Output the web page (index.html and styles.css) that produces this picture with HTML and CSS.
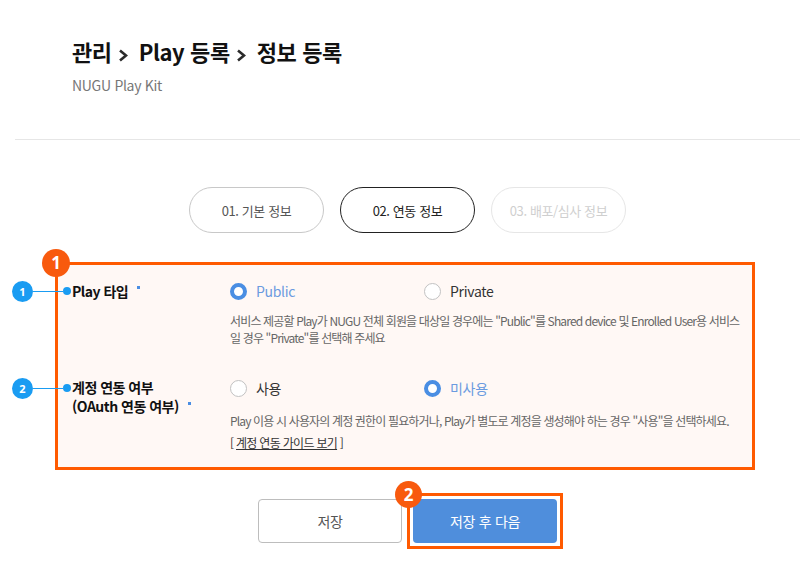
FILE: index.html
```html
<!DOCTYPE html>
<html lang="ko">
<head>
<meta charset="utf-8">
<title>정보 등록</title>
<link rel="stylesheet" href="styles.css">
</head>
<body>
<div class="page">
  <header class="page-header">
    <h1 class="page-title">관리<svg class="crumb-sep" width="10" height="13" viewBox="0 0 10 13" aria-hidden="true"><polyline points="2,1.5 8,6.5 2,11.5" fill="none" stroke="#2b2b2b" stroke-width="2.6" stroke-linejoin="miter"/></svg>Play 등록<svg class="crumb-sep" width="10" height="13" viewBox="0 0 10 13" aria-hidden="true"><polyline points="2,1.5 8,6.5 2,11.5" fill="none" stroke="#2b2b2b" stroke-width="2.6" stroke-linejoin="miter"/></svg>정보 등록</h1>
    <p class="page-sub">NUGU Play Kit</p>
  </header>

  <nav class="steps">
    <span class="step step--done">01. 기본 정보</span>
    <span class="step step--current">02. 연동 정보</span>
    <span class="step step--todo">03. 배포/심사 정보</span>
  </nav>

  <section class="form-box">
    <span class="badge badge--box">1</span>

    <div class="form-row form-row--first">
      <div class="form-label">
        <span class="callout"><span class="callout-num">1</span><span class="callout-line"></span><span class="callout-dot"></span></span>
        Play 타입<i class="req"></i>
      </div>
      <div class="form-field">
        <div class="radio-group">
          <label class="radio radio--on"><span class="radio-circle"></span>Public</label>
          <label class="radio"><span class="radio-circle"></span>Private</label>
        </div>
        <p class="help help--first">서비스 제공할 Play가 NUGU 전체 회원을 대상일 경우에는 "Public"를 Shared device 및 Enrolled User용 서비스<br>일 경우 "Private"를 선택해 주세요</p>
      </div>
    </div>

    <div class="form-row form-row--second">
      <div class="form-label form-label--two">
        <span class="callout"><span class="callout-num">2</span><span class="callout-line"></span><span class="callout-dot"></span></span>
        계정 연동 여부<br>(OAuth 연동 여부)<i class="req"></i>
      </div>
      <div class="form-field">
        <div class="radio-group">
          <label class="radio"><span class="radio-circle"></span>사용</label>
          <label class="radio radio--on"><span class="radio-circle"></span>미사용</label>
        </div>
        <p class="help help--second">Play 이용 시 사용자의 계정 권한이 필요하거나, Play가 별도로 계정을 생성해야 하는 경우 "사용"을 선택하세요.</p>
        <p class="guide">[ <a class="guide-link" href="#">계정 연동 가이드 보기</a> ]</p>
      </div>
    </div>
  </section>

  <div class="actions">
    <button class="btn btn--line" type="button">저장</button>
    <span class="btn-wrap">
      <button class="btn btn--primary" type="button">저장 후 다음</button>
      <span class="badge badge--btn">2</span>
    </span>
  </div>
</div>
</body>
</html>
```

FILE: styles.css
```css
* { box-sizing: border-box; }

html, body {
  margin: 0;
  padding: 0;
  background: #fff;
}

body {
  font-family: "Noto Sans CJK KR", "Noto Sans", sans-serif;
  color: #222;
}

.page {
  margin-left: 15px;
  width: 785px;
  padding-bottom: 40px;
}

.page-header {
  padding: 37px 0 44px 57px;
  border-bottom: 1px solid #e6e6e6;
}

.page-title {
  margin: 0;
  font-size: 22px;
  line-height: 28px;
  font-weight: 700;
  color: #111;
  letter-spacing: -0.4px;
  white-space: nowrap;
}

.crumb-sep {
  display: inline-block;
  vertical-align: -1px;
  margin: 0 11px 0 6px;
}

.page-sub {
  margin: 10px 0 0;
  font-size: 14px;
  line-height: 20px;
  color: #777;
  letter-spacing: -0.3px;
}

.steps {
  display: flex;
  justify-content: center;
  gap: 16px;
  margin-top: 47px;
}

.step {
  width: 135px;
  height: 46px;
  border-radius: 23px;
  border: 1px solid #c8c8c8;
  display: flex;
  align-items: center;
  justify-content: center;
  font-size: 13px;
  letter-spacing: -0.4px;
  color: #555;
  background: #fff;
}

.step--current {
  border-color: #222;
  color: #222;
}

.step--todo {
  border-color: #e6e6e6;
  color: #cfcfcf;
}

.form-box {
  position: relative;
  margin: 29px 0 0 40px;
  width: 700px;
  border: 3px solid #ff5a00;
  background: #fff8f5;
  padding: 16px 14px 16px 14px;
}

.badge {
  position: absolute;
  width: 28px;
  height: 28px;
  border-radius: 50%;
  background: #f85a0e;
  color: #fff;
  font-weight: 700;
  font-size: 17px;
  line-height: 28px;
  text-align: center;
  font-family: "Noto Sans", "Noto Sans CJK KR", sans-serif;
  z-index: 2;
}

.badge--box {
  left: -16px;
  top: -16px;
}

.form-row {
  display: grid;
  grid-template-columns: 158px 1fr;
}

.form-row--second {
  margin-top: 32px;
}

.form-label {
  position: relative;
  font-size: 14px;
  font-weight: 700;
  line-height: 20px;
  color: #111;
  letter-spacing: -0.5px;
}

.form-label--two {
  line-height: 19px;
}

.req {
  display: inline-block;
  width: 3px;
  height: 3px;
  background: #4a8ee3;
  vertical-align: top;
  margin: 5px 0 0 9px;
}

.callout {
  position: absolute;
  left: -60px;
  top: 0;
  height: 20px;
  display: flex;
  align-items: center;
}

.callout-num {
  width: 21px;
  height: 21px;
  border-radius: 50%;
  background: #1a9cf2;
  color: #fff;
  font-family: "Noto Sans", sans-serif;
  font-size: 11px;
  font-weight: 700;
  line-height: 21px;
  text-align: center;
  letter-spacing: 0;
}

.callout-line {
  width: 30px;
  height: 1px;
  background: #1a9cf2;
}

.callout-dot {
  width: 8px;
  height: 8px;
  border-radius: 50%;
  background: #1a9cf2;
}

.radio-group {
  display: flex;
}

.radio {
  width: 194px;
  display: flex;
  align-items: center;
  gap: 9px;
  height: 20px;
  font-size: 14px;
  color: #333;
  letter-spacing: -0.3px;
}

.radio-circle {
  width: 17px;
  height: 17px;
  border-radius: 50%;
  border: 1px solid #c2c2c2;
  background: #fff;
  flex: none;
}

.radio--on {
  color: #6b9be0;
}

.radio--on .radio-circle {
  border: 4px solid #4a8ee3;
}

.help {
  margin: 0;
  font-size: 12px;
  line-height: 17px;
  color: #666;
  letter-spacing: -0.85px;
  white-space: nowrap;
}

.help--first {
  margin-top: 11px;
}

.help--second {
  margin-top: 14px;
}

.guide {
  margin: 5px 0 0;
  font-size: 12px;
  line-height: 17px;
  color: #333;
  letter-spacing: -0.7px;
}

.guide-link {
  color: #333;
  text-decoration: underline;
}

.actions {
  display: flex;
  justify-content: center;
  gap: 11px;
  margin-top: 29px;
}

.btn-wrap {
  position: relative;
  display: inline-flex;
}

.btn-wrap::after {
  content: "";
  position: absolute;
  left: -6px;
  top: -6px;
  right: -6px;
  bottom: -6px;
  border: 3px solid #ff5a00;
  pointer-events: none;
}

.btn {
  width: 144px;
  height: 44px;
  border-radius: 4px;
  font-family: "Noto Sans CJK KR", "Noto Sans", sans-serif;
  font-size: 14px;
  letter-spacing: -0.3px;
  padding: 0;
  cursor: pointer;
}

.btn--line {
  background: #fff;
  border: 1px solid #bdbdbd;
  color: #555;
}

.btn--primary {
  background: #4f8edc;
  border: 0;
  color: #fff;
}

.badge--btn {
  left: -18px;
  top: -18px;
  width: 27px;
  height: 27px;
  line-height: 27px;
}
```
